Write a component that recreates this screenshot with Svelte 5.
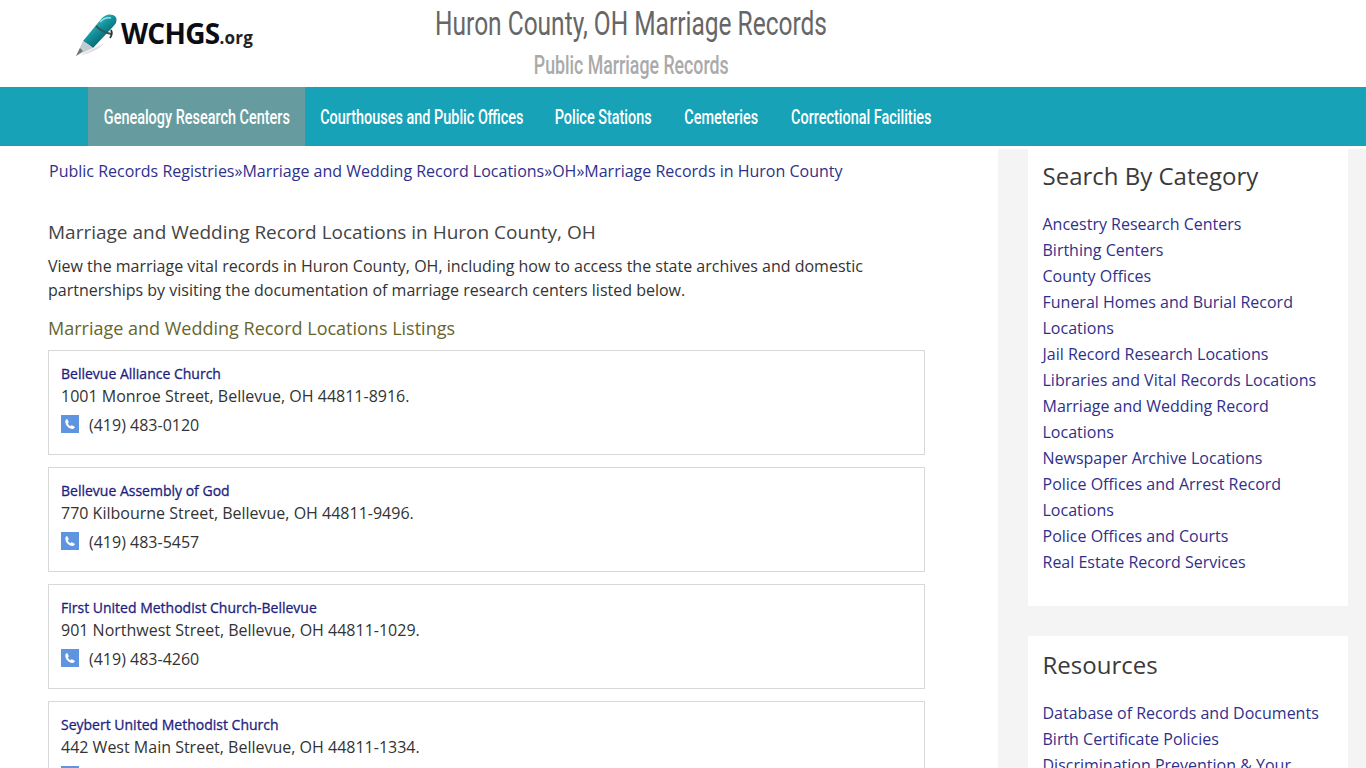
<script>
  const nav = [
    { label: 'Genealogy Research Centers', width: 217 },
    { label: 'Courthouses and Public Offices', width: 234 },
    { label: 'Police Stations', width: 129 },
    { label: 'Cemeteries', width: 106 },
    { label: 'Correctional Facilities', width: 175 }
  ];
  const listings = [
    ['Bellevue Alliance Church','1001 Monroe Street, Bellevue, OH 44811-8916.','(419) 483-0120'],
    ['Bellevue Assembly of God','770 Kilbourne Street, Bellevue, OH 44811-9496.','(419) 483-5457'],
    ['First United Methodist Church-Bellevue','901 Northwest Street, Bellevue, OH 44811-1029.','(419) 483-4260'],
    ['Seybert United Methodist Church','442 West Main Street, Bellevue, OH 44811-1334.','(419) 483-3531']
  ];
  const cats = ['Ancestry Research Centers','Birthing Centers','County Offices','Funeral Homes and Burial Record Locations','Jail Record Research Locations','Libraries and Vital Records Locations','Marriage and Wedding Record Locations','Newspaper Archive Locations','Police Offices and Arrest Record Locations','Police Offices and Courts','Real Estate Record Services'];
  const res = ['Database of Records and Documents','Birth Certificate Policies','Discrimination Prevention & Your Rights'];
  const crumbs = ['Public Records Registries','Marriage and Wedding Record Locations','OH','Marriage Records in Huron County'];
</script>

<div class="page">
  <header class="top">
    <a class="logo" href="#home">
      <svg class="pen" width="44" height="44" viewBox="0 0 44 44" aria-hidden="true">
        <defs>
          <linearGradient id="penfill" x1="0.2" y1="0.2" x2="0.7" y2="0.8">
            <stop offset="0" stop-color="#3fbfc6"/>
            <stop offset="0.5" stop-color="#128e99"/>
            <stop offset="1" stop-color="#075f68"/>
          </linearGradient>
        </defs>
        <path d="M6 42 Q20 40 30 30 L15 37 Z" fill="#e2e2e2"/>
        <path d="M8 28 L27 5 Q32 0 38 2 Q43 4 41 10 Q38 14 34 18 L18 35 L14 32 Z" fill="url(#penfill)"/>
        <path d="M1 43 L8 28 L14 32 L18 35 Z" fill="#c2ccd0"/>
        <path d="M1 43 L5 35 L8 38 Z" fill="#6c7478"/>
        <path d="M21 13 Q27 19 36 21" stroke="#33575e" stroke-width="1.800" fill="none"/>
        <path d="M36 17 Q38 21 35 25" stroke="#333" stroke-width="1.800" fill="none"/>
        <path d="M25 9 Q30 4 36 5" stroke="#8ee4e6" stroke-width="1.500" fill="none"/>
      </svg>
      <span class="wchgs">WCHGS</span><span class="org">.org</span>
    </a>
    <div class="titles">
      <h1>Huron County, OH Marriage Records</h1>
      <h2>Public Marriage Records</h2>
    </div>
  </header>

  <nav class="nav">
    {#each nav as n, i}
      <a href="#n" class="item" class:active={i === 0} style="width: {n.width}px"><span>{n.label}</span></a>
    {/each}
  </nav>

  <div class="body">
    <main class="main">
      <div class="crumbs">
        {#each crumbs as c, i}
          {#if i > 0}<span>»</span>{/if}<a href="#c">{c}</a>
        {/each}
      </div>
      <h3>Marriage and Wedding Record Locations in Huron County, OH</h3>
      <p class="intro">View the marriage vital records in Huron County, OH, including how to access the state archives and domestic partnerships by visiting the documentation of marriage research centers listed below.</p>
      <h4>Marriage and Wedding Record Locations Listings</h4>
      {#each listings as l}
        <div class="card">
          <a class="name" href="#l">{l[0]}</a>
          <div class="addr">{l[1]}</div>
          <div class="phone">
            <span class="ico">
              <svg width="12" height="12" viewBox="0 0 24 24" aria-hidden="true"><path fill="#fff" d="M6.6 2.5 9.5 8c.2.4.1.8-.2 1.1L7.6 11c1 2.300 2.900 4.300 5.300 5.500l1.900-1.800c.3-.3.800-.4 1.100-.2l5.300 2.900c.4.200.6.700.4 1.100-.7 2-2.500 3.500-4.600 3.500C9.500 22 2.500 14 2.600 7c0-2 1.600-4 3-4.800.4-.2.800-.1 1 .3z"/></svg>
            </span>
            <span>{l[2]}</span>
          </div>
        </div>
      {/each}
    </main>
    <aside class="side">
      <section class="box">
        <h5>Search By Category</h5>
        <ul>{#each cats as c}<li><a href="#s">{c}</a></li>{/each}</ul>
      </section>
      <section class="box">
        <h5>Resources</h5>
        <ul>{#each res as c}<li><a href="#s">{c}</a></li>{/each}</ul>
      </section>
    </aside>
  </div>
</div>

<style>
  :global(body) { margin: 0; background: #fff; }
  :global(html), :global(body) { overflow: hidden; }
  .page { height: 768px; overflow: hidden; font-family: "Open Sans", sans-serif; font-size: 16px; color: #333; }
  a { text-decoration: none; color: #30308c; }

  .top { height: 87px; display: flex; }
  .logo { width: 435px; flex: none; display: flex; align-items: baseline; padding: 11px 0 0 75px; box-sizing: border-box; color: #111; }
  .pen { flex: none; align-self: flex-start; margin-top: 2px; margin-right: 2px; }
  .wchgs { font-weight: 700; font-size: 28px; letter-spacing: -0.7px; color: #0c0c14; line-height: 44px; }
  .org { font-weight: 700; font-size: 17px; letter-spacing: 0.2px; color: #222; }
  .titles { width: 392px; display: flex; flex-direction: column; align-items: center; white-space: nowrap; }
  h1, h2 { font-family: Roboto, sans-serif; margin: 0; flex: none; }
  h1 { font-size: 33.500px; font-weight: 400; line-height: 36px; padding-top: 6px; color: #666; transform: scaleX(0.731); }
  h2 { font-size: 25px; font-weight: 500; line-height: 30px; padding-top: 9px; color: #aaa; transform: scaleX(0.71); }

  .nav { height: 59px; background: #17a2b8; display: flex; padding-left: 88px; }
  .item { font-family: Roboto, sans-serif; font-weight: 500; font-size: 20px; color: #fff; line-height: 60px; white-space: nowrap; display: flex; justify-content: center; }
  .item span { flex: none; transform: scaleX(0.722); }
  .item.active { background: #669c9f; }

  .body { display: flex; height: 622px; }
  .main { width: 998px; flex: none; box-sizing: border-box; padding: 13px 73px 0 48px; }
  .crumbs { font-size: 16px; line-height: 24px; padding-left: 1px; color: #30308c; white-space: nowrap; }
  h3 { font-size: 19px; font-weight: 400; color: #444; line-height: 26px; margin: 36px 0 0; }
  .intro { font-size: 16px; line-height: 24px; margin: 9px 0 0; color: #333; }
  h4 { font-size: 18px; font-weight: 400; color: #66662e; line-height: 26px; margin: 13px 0 9px; }
  .card { height: 105px; box-sizing: border-box; border: 1px solid #d8d8d8; padding: 12px 12px 0; margin-bottom: 12px; }
  .name { display: block; font-size: 14px; font-weight: 400; line-height: 22px; color: #1e1e80; -webkit-text-stroke: 0.3px #1e1e80; }
  .addr { font-size: 16px; line-height: 22px; color: #333; }
  .phone { display: flex; align-items: center; gap: 10px; margin-top: 7px; height: 22px; color: #333; }
  .ico { width: 18px; height: 18px; background: #5f95e0; display: flex; align-items: center; justify-content: center; margin-top: -3px; }

  .side { flex: 1; background: #f4f4f4; margin-top: 3px; padding: 0 18px 0 30px; }
  .box { background: #fff; padding: 11px 15px 31px 14.500px; margin-bottom: 30px; }
  .box + .box { padding-top: 13px; }
  h5 { font-size: 24px; font-weight: 400; line-height: 32px; margin: 0 0 19px; color: #3a3a3a; }
  ul { list-style: none; margin: 0; padding: 0; }
  li { line-height: 26px; font-size: 16px; }
</style>
